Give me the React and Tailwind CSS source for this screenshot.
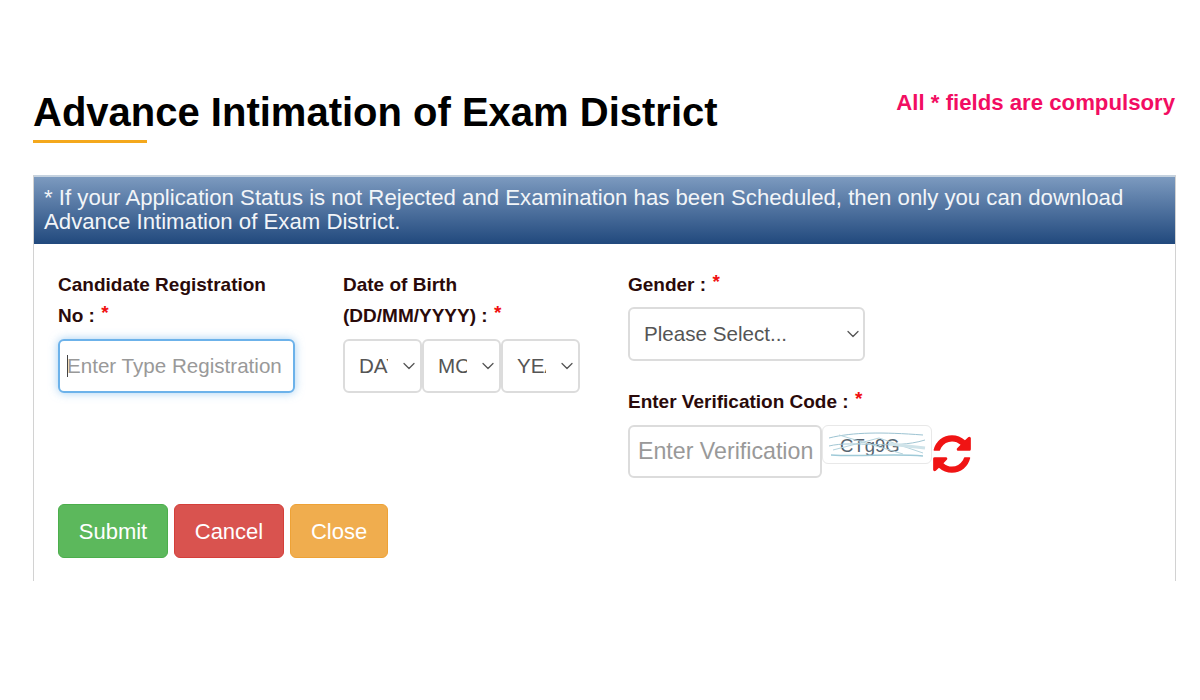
import React from 'react';
import { ChevronDown } from 'lucide-react';

function Label({ children }) {
  return (
    <label className="block text-[19px] leading-[31px] font-bold text-[#2a0a0a]">
      {children} <span className="ml-px text-[#f01010] relative -top-[3px]">*</span>
    </label>
  );
}

function SelectBox({ value, className, chevronClass }) {
  return (
    <div className={`relative ${className}`}>
      <select
        defaultValue={value}
        className="w-full h-full appearance-none pl-[14px] pr-[32px] text-[20.6px] text-[#555555] bg-white border-2 border-[#dcdcdc] rounded-[6px] outline-none"
      >
        <option>{value}</option>
      </select>
      <ChevronDown className={`absolute top-1/2 -translate-y-1/2 w-[20px] h-[20px] text-[#555555] ${chevronClass}`} strokeWidth={1.5} />
    </div>
  );
}

function Captcha() {
  return (
    <div className="relative w-[110px] h-[39px] bg-white border border-[#e8e8e8] rounded-[6px] overflow-hidden">
      <span className="absolute left-[17px] top-[9px] text-[18.5px] leading-[22px] text-[#56646f]">CTg9G</span>
      <svg className="absolute inset-0" width="110" height="39" viewBox="0 0 110 39" fill="none">
        <path d="M6 12 C30 6 60 6 100 9" stroke="#9cc3d2" strokeWidth="1" />
        <path d="M6 20 C30 14 70 24 102 14" stroke="#a2c6d3" strokeWidth="1" />
        <path d="M8 29 C40 31 70 27 100 30" stroke="#9fcad8" strokeWidth="1.5" />
        <path d="M10 24 L56 12 L100 27" stroke="#b4d3dd" strokeWidth="1" />
        <path d="M16 9 L80 28" stroke="#b4d3dd" strokeWidth="1" />
        <path d="M66 18 L102 22" stroke="#cfe3e9" strokeWidth="3" />
      </svg>
    </div>
  );
}

function RefreshIcon() {
  return (
    <svg className="shrink-0 -ml-[2px] mt-[7px] -mr-[5px] text-[#f01414]" width="44" height="44" viewBox="0 0 1792 1792" fill="currentColor">
      <path d="M1639 1056q0 5-1 7-64 268-268 434.5t-478 166.5q-146 0-282.5-55t-243.5-157l-129 129q-19 19-45 19t-45-19-19-45v-448q0-26 19-45t45-19h448q26 0 45 19t19 45-19 45l-137 137q71 66 161 102t187 36q134 0 250-65t186-179q11-17 53-117 8-23 30-23h192q13 0 22.5 9.5t9.5 22.5zm25-800v448q0 26-19 45t-45 19h-448q-26 0-45-19t-19-45 19-45l138-138q-148-137-349-137-134 0-250 65t-186 179q-11 17-53 117-8 23-30 23h-199q-13 0-22.5-9.5t-9.5-22.5v-7q65-268 270-434.5t480-166.5q146 0 284 55.5t245 156.5l130-129q19-19 45-19t45 19 19 45z" />
    </svg>
  );
}

export default function App() {
  return (
    <div className='w-[1200px] h-[700px] bg-white overflow-hidden pt-[88px] font-["Liberation_Sans",Arial,sans-serif]'>
      <div className="flex justify-between pl-[33px] pr-[25px]">
        <div>
          <h1 className="text-[40px] leading-[48px] font-bold text-black">Advance Intimation of Exam District</h1>
          <div className="w-[114px] h-[3px] mt-[4px] bg-[#f4a81c]" />
        </div>
        <p className="text-[22.2px] leading-[30px] font-bold text-[#f20d62]">All * fields are compulsory</p>
      </div>

      <div className="mt-[32px] ml-[33px] w-[1143px] h-[406px] border-x border-[#d2d2d2]">
        <div className="h-[69px] px-[10px] pt-[9px] text-[22.2px] leading-[24px] text-[#f2f5f8] border-t-2 border-[#c5d2df] bg-gradient-to-b from-[#7c9abf] to-[#21497d]">
          * If your Application Status is not Rejected and Examination has been Scheduled, then only you can download Advance Intimation of Exam District.
        </div>

        <div className="pl-[24px] pt-[25px]">
          <div className="grid grid-cols-[285px_285px_1fr] h-[235px]">
            <div>
              <Label>Candidate Registration<br />No :</Label>
              <div className="relative mt-[8px] w-[237px]">
                <input
                  placeholder="Enter Type Registration"
                  className="w-full h-[54px] pl-[7px] pr-[2px] text-[20.6px] text-[#555555] placeholder:text-[#999999] bg-white border-2 border-[#6cb2ea] rounded-[6px] outline-none shadow-[0_0_10px_rgba(102,175,233,0.6)]"
                />
                <span className="absolute left-[9px] top-[16px] w-px h-[22px] bg-[#444444]" />
              </div>
            </div>

            <div>
              <Label>Date of Birth<br />(DD/MM/YYYY) :</Label>
              <div className="mt-[8px] flex">
                <SelectBox value="DAY" className="w-[79px] h-[54px]" chevronClass="right-[3px]" />
                <SelectBox value="MONTH" className="w-[79px] h-[54px]" chevronClass="right-[3px]" />
                <SelectBox value="YEAR" className="w-[79px] h-[54px]" chevronClass="right-[3px]" />
              </div>
            </div>

            <div>
              <Label>Gender :</Label>
              <SelectBox value="Please Select..." className="mt-[7px] w-[237px] h-[54px]" chevronClass="right-[2px]" />

              <div className="mt-[25px]">
                <Label>Enter Verification Code :</Label>
              </div>
              <div className="mt-[8px] flex items-start">
                <input
                  placeholder="Enter Verification"
                  className="w-[194px] h-[53px] pl-[8px] pr-[2px] text-[23.2px] placeholder:text-[#999999] bg-white border-2 border-[#dcdcdc] rounded-[6px] outline-none"
                />
                <Captcha />
                <RefreshIcon />
              </div>
            </div>
          </div>

          <div className="flex gap-[6px]">
            <button className="w-[110px] h-[54px] text-[22px] text-white bg-[#5cb85c] border border-[#4cae4c] rounded-[6px]">Submit</button>
            <button className="w-[110px] h-[54px] text-[22px] text-white bg-[#d9534f] border border-[#d43f3a] rounded-[6px]">Cancel</button>
            <button className="w-[98px] h-[54px] text-[22px] text-white bg-[#f0ad4e] border border-[#eea236] rounded-[6px]">Close</button>
          </div>
        </div>
      </div>
    </div>
  );
}
